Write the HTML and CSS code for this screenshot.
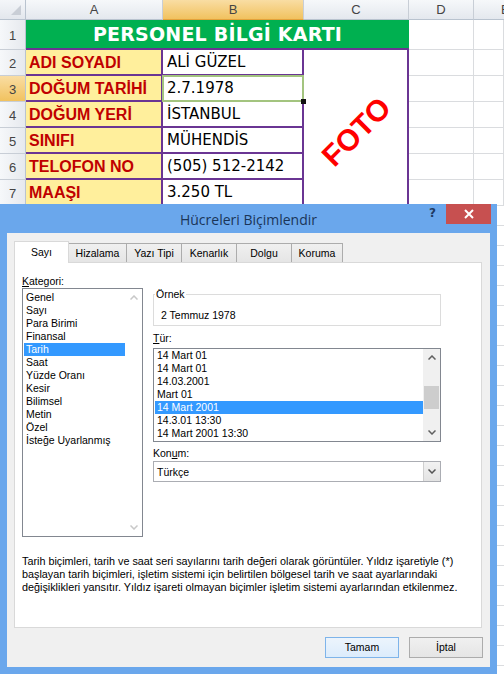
FILE: index.html
```html
<!DOCTYPE html>
<html lang="tr">
<head>
<meta charset="utf-8">
<title>Hücreleri Biçimlendir</title>
<link rel="stylesheet" href="styles.css">
</head>
<body>
<div class="sheet">
  <div class="corner"><svg width="12" height="12" viewBox="0 0 12 12"><polygon points="11,1 11,11 1,11" fill="#c9ced6"/></svg></div>
  <div class="ch">A</div><div class="ch ch-sel">B</div><div class="ch">C</div><div class="ch">D</div><div class="ch ch-e">E</div>

  <div class="rh">1</div><div class="title-cell">PERSONEL BİLGİ KARTI</div><div class="c"></div><div class="c"></div>

  <div class="rh">2</div><div class="lab">ADI SOYADI</div><div class="val">ALİ GÜZEL</div>
  <div class="foto"><span class="foto-text">FOTO</span></div><div class="c"></div><div class="c"></div>

  <div class="rh rh-sel">3</div><div class="lab">DOĞUM TARİHİ</div><div class="val active">2.7.1978<span class="handle"></span></div><div class="c"></div><div class="c"></div>
  <div class="rh">4</div><div class="lab">DOĞUM YERİ</div><div class="val">İSTANBUL</div><div class="c"></div><div class="c"></div>
  <div class="rh">5</div><div class="lab">SINIFI</div><div class="val">MÜHENDİS</div><div class="c"></div><div class="c"></div>
  <div class="rh">6</div><div class="lab">TELOFON NO</div><div class="val">(505) 512-2142</div><div class="c"></div><div class="c"></div>
  <div class="rh">7</div><div class="lab">MAAŞI</div><div class="val">3.250 TL</div><div class="c"></div><div class="c"></div>
  <div class="filler"></div>
</div>

<div class="dialog">
  <div class="titlebar">
    <span class="title">Hücreleri Biçimlendir</span>
    <span class="help">?</span>
    <span class="close"><svg width="10" height="10" viewBox="0 0 10 10"><path d="M1 1 L9 9 M9 1 L1 9" stroke="#fff" stroke-width="2"/></svg></span>
  </div>
  <div class="client">
    <div class="tabs">
      <div class="tab tab-sel w55">Sayı</div>
      <div class="tab w58">Hizalama</div>
      <div class="tab w55">Yazı Tipi</div>
      <div class="tab w55">Kenarlık</div>
      <div class="tab w55">Dolgu</div>
      <div class="tab w51">Koruma</div>
    </div>
    <div class="panel">
      <div class="panel-top">
        <div class="left">
          <div class="lbl"><u>K</u>ategori:</div>
          <div class="list cat">
            <div class="items">
              <div class="item">Genel</div>
              <div class="item">Sayı</div>
              <div class="item">Para Birimi</div>
              <div class="item">Finansal</div>
              <div class="item item-sel">Tarih</div>
              <div class="item">Saat</div>
              <div class="item">Yüzde Oranı</div>
              <div class="item">Kesir</div>
              <div class="item">Bilimsel</div>
              <div class="item">Metin</div>
              <div class="item">Özel</div>
              <div class="item">İsteğe Uyarlanmış</div>
            </div>
            <div class="sbar sbar-off">
              <div class="arrow"><svg width="8" height="5" viewBox="0 0 8 5"><path d="M0.5 4.5 L4 1 L7.5 4.5" fill="none" stroke="currentColor" stroke-width="1.5"/></svg></div>
              <div class="track"></div>
              <div class="arrow"><svg width="8" height="5" viewBox="0 0 8 5"><path d="M0.5 0.5 L4 4 L7.5 0.5" fill="none" stroke="currentColor" stroke-width="1.5"/></svg></div>
            </div>
          </div>
        </div>
        <div class="right">
          <div class="sample">
            <span class="legend">Örnek</span>
            <div class="sample-text">2 Temmuz 1978</div>
          </div>
          <div class="lbl lbl-tur"><u>T</u>ür:</div>
          <div class="list tur">
            <div class="items">
              <div class="item">14 Mart 01</div>
              <div class="item">14 Mart 01</div>
              <div class="item">14.03.2001</div>
              <div class="item">Mart 01</div>
              <div class="item item-sel">14 Mart 2001</div>
              <div class="item">14.3.01 13:30</div>
              <div class="item">14 Mart 2001 13:30</div>
            </div>
            <div class="sbar">
              <div class="arrow"><svg width="8" height="5" viewBox="0 0 8 5"><path d="M0.5 4.5 L4 1 L7.5 4.5" fill="none" stroke="currentColor" stroke-width="1.5"/></svg></div>
              <div class="track"><div class="thumb"></div></div>
              <div class="arrow"><svg width="8" height="5" viewBox="0 0 8 5"><path d="M0.5 0.5 L4 4 L7.5 0.5" fill="none" stroke="currentColor" stroke-width="1.5"/></svg></div>
            </div>
          </div>
          <div class="lbl lbl-konum">Kon<u>u</u>m:</div>
          <div class="combo">
            <span class="combo-text">Türkçe</span>
            <span class="combo-btn"><svg width="8" height="5" viewBox="0 0 8 5"><path d="M0.5 0.5 L4 4 L7.5 0.5" fill="none" stroke="#555" stroke-width="1.5"/></svg></span>
          </div>
        </div>
      </div>
      <div class="desc">Tarih biçimleri, tarih ve saat seri sayılarını tarih değeri olarak görüntüler. Yıldız işaretiyle (*)<br>başlayan tarih biçimleri, işletim sistemi için belirtilen bölgesel tarih ve saat ayarlarındaki<br>değişiklikleri yansıtır. Yıldız işareti olmayan biçimler işletim sistemi ayarlarından etkilenmez.</div>
    </div>
    <div class="buttons">
      <div class="btn btn-default">Tamam</div>
      <div class="btn">İptal</div>
    </div>
  </div>
</div>
</body>
</html>
```

FILE: styles.css
```css
body {
  margin: 0;
  width: 504px;
  height: 674px;
  overflow: hidden;
  position: relative;
  background: #fff;
  font-family: "Liberation Sans", Arial, sans-serif;
}

/* ---------- spreadsheet ---------- */
.sheet {
  display: grid;
  grid-template-columns: 26px 137px 141px 105px 65px 30px;
  grid-template-rows: 20px 30px repeat(6, 26px) 480px;
  width: 504px;
}
.sheet > div { box-sizing: border-box; }
.corner {
  background: linear-gradient(#f4f6f9, #e3e7ed);
  border-right: 1px solid #b9c3cf;
  border-bottom: 1px solid #b9c3cf;
  display: flex;
  align-items: flex-end;
  justify-content: flex-end;
  padding: 0 3px 3px 0;
}
.ch {
  background: linear-gradient(#f6f8fa, #e4e8ee);
  border-right: 1px solid #c8ced6;
  border-bottom: 1px solid #b9c3cf;
  color: #444;
  font-size: 13px;
  text-align: center;
  line-height: 20px;
}
.ch-e {
  text-align: left;
  padding-left: 27px;
  border-right: none;
  overflow: hidden;
}
.ch-sel {
  background: linear-gradient(#f9dda3, #f1c25f);
  border-bottom: 1px solid #e3a23b;
}
.rh {
  background: linear-gradient(90deg, #f6f8fa, #e6e9ee);
  border-right: 1px solid #b9c3cf;
  border-bottom: 1px solid #c8ced6;
  color: #444;
  font-size: 13px;
  text-align: center;
  display: flex;
  align-items: center;
  justify-content: center;
  padding-top: 2px;
}
.rh-sel { background: linear-gradient(#f9dda3, #f1c25f); }
.c {
  border-right: 1px solid #dadcdf;
  border-bottom: 1px solid #dadcdf;
}
.title-cell {
  grid-column: span 3;
  background: #00b050;
  border-bottom: 2px solid #6a3593;
  color: #fff;
  font-family: "DejaVu Sans", Verdana, sans-serif;
  font-weight: bold;
  font-size: 19px;
  letter-spacing: 0.2px;
  text-align: center;
  line-height: 28px;
}
.lab {
  background: #ffef9c;
  border-right: 2px solid #6a3593;
  border-bottom: 2px solid #6a3593;
  color: #c00000;
  font-weight: bold;
  font-size: 16px;
  line-height: 25px;
  padding-left: 3px;
  white-space: nowrap;
}
.val {
  background: #fff;
  border-right: 2px solid #6a3593;
  border-bottom: 2px solid #6a3593;
  color: #000;
  font-family: "DejaVu Sans", Verdana, sans-serif;
  font-size: 15px;
  line-height: 25px;
  padding-left: 4px;
  white-space: nowrap;
}
.val.active { position: relative; }
.val.active::after {
  content: "";
  position: absolute;
  left: -1px; top: -1px; right: -2px; bottom: -2px;
  border: 2px solid #a3c47f;
}
.handle {
  position: absolute;
  right: -4px;
  bottom: -4px;
  width: 5px;
  height: 5px;
  background: #111;
  z-index: 2;
}
.foto {
  grid-row: span 6;
  background: #fff;
  border-right: 2px solid #6a3593;
  border-bottom: 2px solid #6a3593;
  display: flex;
  align-items: center;
  justify-content: center;
  padding: 10px 0 0 2px;
}
.foto-text {
  display: block;
  transform: rotate(-45deg);
  color: #ff0000;
  font-weight: bold;
  font-size: 30px;
}
.filler {
  grid-column: 1 / -1;
  background: repeating-linear-gradient(to bottom, #fff 0 19px, #dadcdf 19px 20px);
}

/* ---------- dialog ---------- */
.dialog {
  position: absolute;
  left: 0;
  top: 204px;
  width: 497px;
  height: 470px;
  box-sizing: border-box;
  background: #6aa7ec;
  padding: 29px 7px 7px 7px;
  display: flex;
  flex-direction: column;
  font-size: 10.5px;
  color: #000;
}
.titlebar {
  position: absolute;
  left: 0; top: 0; right: 0;
  height: 29px;
  display: flex;
  align-items: center;
  justify-content: center;
}
.title {
  font-family: "Open Sans", "Noto Sans", sans-serif;
  font-size: 14px;
  color: #1a3558;
  padding-top: 1px;
}
.help {
  position: absolute;
  left: 429px;
  top: 2px;
  font-family: "DejaVu Sans", sans-serif;
  font-weight: bold;
  font-size: 12px;
  color: #1f3b63;
}
.close {
  position: absolute;
  right: 6px;
  top: 0;
  width: 45px;
  height: 20px;
  background: #c75050;
  display: flex;
  align-items: center;
  justify-content: center;
}
.client {
  flex: 1;
  background: #f0f0f0;
  padding: 8px 7px 0 7px;
  display: flex;
  flex-direction: column;
}
.tabs {
  display: flex;
  align-items: flex-end;
  height: 22px;
  margin-bottom: -1px;
  position: relative;
  z-index: 1;
}
.tab {
  box-sizing: border-box;
  height: 19px;
  margin-bottom: 1px;
  border: 1px solid #acacac;
  border-bottom: none;
  border-left: none;
  background: linear-gradient(#f0f0f0, #e5e5e5);
  text-align: center;
  line-height: 18px;
  white-space: nowrap;
}
.tab-sel {
  height: 22px;
  margin-bottom: 0;
  background: #fff;
  border-left: 1px solid #d9d9d9;
  border-color: #d9d9d9;
  line-height: 20px;
}
.w55 { width: 55px; }
.w58 { width: 58px; }
.w51 { width: 51px; }

.panel {
  box-sizing: border-box;
  width: 468px;
  height: 366px;
  background: #fff;
  border: 1px solid #d9d9d9;
  padding: 11px 0 0 7px;
}
.panel-top {
  display: flex;
  gap: 10px;
}
.left { width: 121px; }
.right { width: 288px; }
.lbl {
  line-height: 14px;
  height: 14px;
}
.list {
  box-sizing: border-box;
  border: 1px solid #828790;
  background: #fff;
  display: flex;
}
.list .items { flex: 1; }
.item {
  height: 13px;
  line-height: 13px;
  padding-left: 3px;
  white-space: nowrap;
}
.item-sel {
  background: #3399ff;
  color: #fff;
  margin-left: 1px;
  padding-left: 2px;
}
.cat { height: 249px; }
.cat .items { padding-top: 2px; }
.tur { height: 94px; margin-top: 3px; }
.sbar {
  width: 17px;
  display: flex;
  flex-direction: column;
  background: #f0f0f0;
  color: #606060;
}
.sbar-off { background: #fff; color: #c8c8c8; }
.arrow {
  height: 17px;
  display: flex;
  align-items: center;
  justify-content: center;
}
.track { flex: 1; position: relative; }
.thumb {
  position: absolute;
  left: 1px; right: 1px;
  top: 20px;
  height: 23px;
  background: #cdcdcd;
}
.sample {
  box-sizing: border-box;
  position: relative;
  margin-top: 20px;
  height: 32px;
  border: 1px solid #dcdcdc;
  padding: 14px 0 0 7px;
}
.legend {
  position: absolute;
  left: 1px;
  top: -7px;
  line-height: 13px;
  padding: 0 1px;
  background: #fff;
}
.sample-text { line-height: 13px; }
.lbl-tur { margin-top: 5px; }
.lbl-konum { margin-top: 4px; }
.combo {
  box-sizing: border-box;
  margin-top: 1px;
  height: 21px;
  border: 1px solid #abadb3;
  background: #fff;
  display: flex;
  align-items: center;
  justify-content: space-between;
  padding-left: 3px;
}
.combo-btn {
  box-sizing: border-box;
  width: 17px;
  height: 19px;
  background: linear-gradient(#f2f2f2, #e3e3e3);
  border-left: 1px solid #cfcfcf;
  display: flex;
  align-items: center;
  justify-content: center;
}
.desc {
  margin-top: 18px;
  line-height: 13px;
  font-size: 10.8px;
  white-space: nowrap;
}
.buttons {
  display: flex;
  justify-content: flex-end;
  gap: 10px;
  margin-top: 9px;
}
.btn {
  box-sizing: border-box;
  width: 74px;
  height: 21px;
  border: 1px solid #acacac;
  background: linear-gradient(#f0f0f0, #e5e5e5);
  text-align: center;
  line-height: 19px;
}
.btn-default {
  border-color: #7eb4ea;
  background: linear-gradient(#ecf4fc, #dcecfc);
}
```
